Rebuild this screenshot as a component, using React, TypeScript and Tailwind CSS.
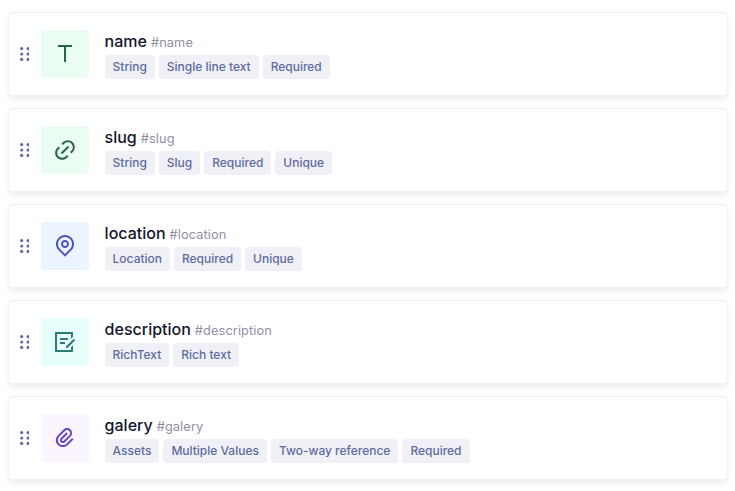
import type { ReactNode } from "react";
import { RiLink, RiMapPinLine, RiDraftLine, RiAttachment2 } from "react-icons/ri";

type Field = { name: string; tags: string[]; icon: ReactNode; tile: string };

const fields: Field[] = [
  {
    name: "name",
    tags: ["String", "Single line text", "Required"],
    tile: "bg-[#eafdf0] text-[#276749]",
    icon: (
      <svg width="24" height="24" viewBox="0 0 24 24" fill="currentColor">
        <path d="M13 5v15h-2V5H5V3h14v2z" />
      </svg>
    ),
  },
  { name: "slug", tags: ["String", "Slug", "Required", "Unique"], tile: "bg-[#eafdf0] text-[#276749]", icon: <RiLink size={24} /> },
  { name: "location", tags: ["Location", "Required", "Unique"], tile: "bg-[#ebf4ff] text-[#4c51bf] pb-0.5", icon: <RiMapPinLine size={24} /> },
  { name: "description", tags: ["RichText", "Rich text"], tile: "bg-[#e6fffa] text-[#2c7a7b] pr-0.5", icon: <RiDraftLine size={24} /> },
  { name: "galery", tags: ["Assets", "Multiple Values", "Two-way reference", "Required"], tile: "bg-[#faf5ff] text-[#6b46c1]", icon: <RiAttachment2 size={24} /> },
];

function DragHandle() {
  return (
    <svg width="9" height="16" viewBox="0 0 9 16" fill="#5f6b9f">
      {[2.6, 8, 13.4].map((y) => (
        <g key={y}>
          <circle cx="1.7" cy={y} r="1.6" />
          <circle cx="8.1" cy={y} r="1.6" />
        </g>
      ))}
    </svg>
  );
}

function FieldCard({ name, tags, icon, tile }: Field) {
  return (
    <div className="flex h-[84px] items-center rounded border border-[#f0f0f6] bg-white pl-[11px] shadow-[0_3px_6px_rgba(0,0,0,0.07)]">
      <DragHandle />
      <div className={`ml-3 flex size-12 items-center justify-center rounded ${tile}`}>{icon}</div>
      <div className="ml-[15.6px]">
        <div className="flex h-[26px] items-baseline gap-1 leading-6">
          <span className="text-base font-medium text-[#12152e]">{name}</span>
          <span className="text-[12.8px] tracking-[0.1px] text-[#8f8fa3]">#{name}</span>
        </div>
        <div className="flex gap-1">
          {tags.map((tag) => (
            <span key={tag} className="h-6 rounded bg-[#f0f1f7] px-2 text-xs leading-6 font-medium tracking-[-0.01px] text-[#5f6b9f]">
              {tag}
            </span>
          ))}
        </div>
      </div>
    </div>
  );
}

export default function App() {
  return (
    <div className="flex h-[491px] flex-col gap-3 overflow-hidden bg-white pt-3 pr-[7px] pl-2 font-['Inter',sans-serif]">
      {fields.map((field) => (
        <FieldCard key={field.name} {...field} />
      ))}
    </div>
  );
}
